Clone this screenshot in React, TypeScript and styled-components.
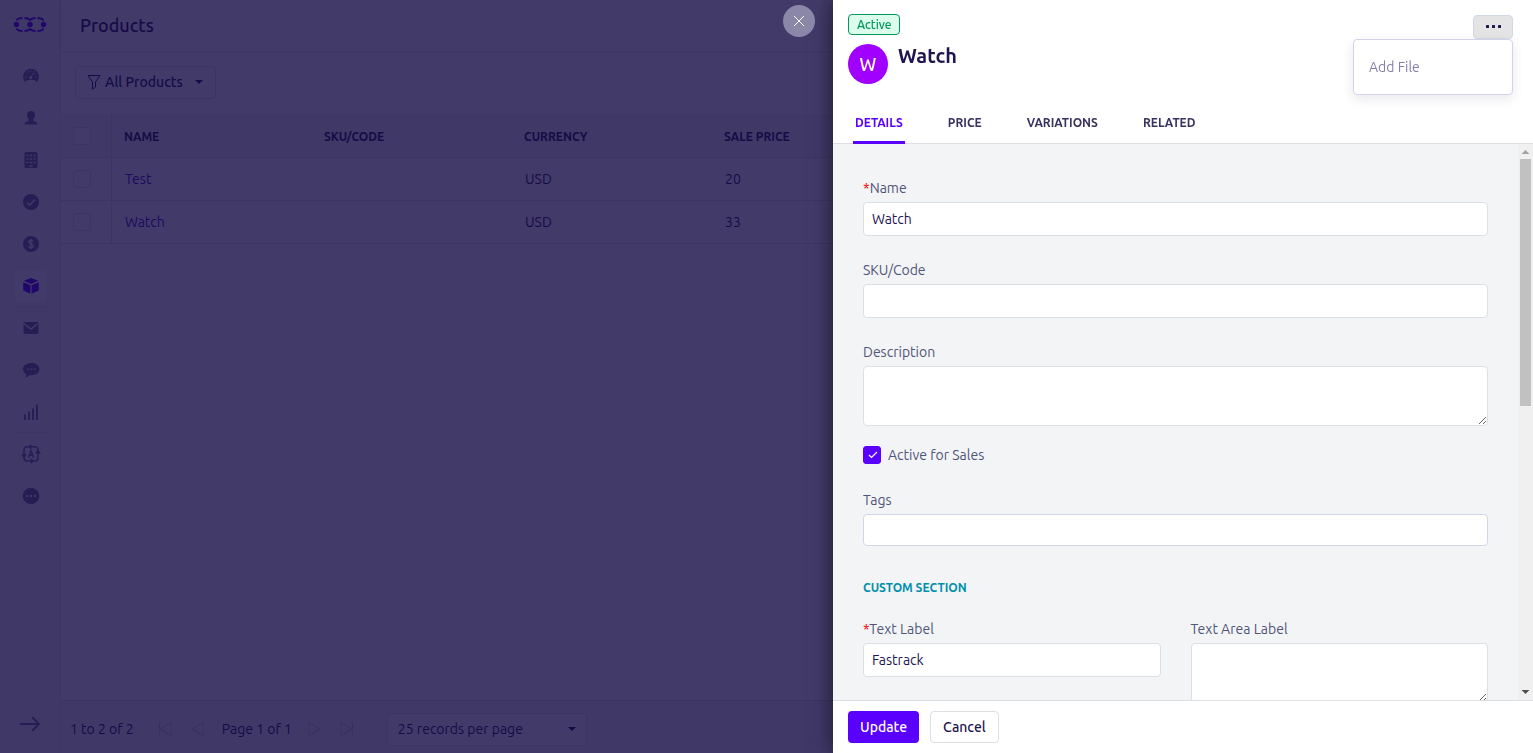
import React, { useState } from "react";
import styled, { createGlobalStyle, css } from "styled-components";

const c = {
  ink: "#1e1650",
  muted: "#50557a",
  brand: "#5a00ff",
  line: "#dcdfe6",
  soft: "#f3f4f6",
  navIcon: "#74709c",
};

const GlobalStyle = createGlobalStyle`
  *, *::before, *::after { box-sizing: border-box; }
  body { margin: 0; background: #fff; }
  body, button, input, textarea, select {
    font-family: Ubuntu, Roboto, sans-serif;
    font-size: 14px;
    line-height: 20px;
    color: ${c.ink};
  }
  button { cursor: pointer; }
`;

const Shell = styled.div`
  display: flex;
  height: 100vh;
  overflow: hidden;
`;

const Sidebar = styled.nav`
  flex: none;
  width: 61px;
  display: flex;
  flex-direction: column;
  align-items: center;
  padding: 16px 0 18px;
  background: ${c.soft};
  border-right: 1px solid ${c.line};
`;

const NavList = styled.ul`
  flex: 1;
  list-style: none;
  margin: 21px 0 0;
  padding: 0 0 0 1px;
`;

const NavItem = styled.li<{ $divided?: boolean }>`
  height: 42px;
  padding: 5px 0;
  border-bottom: 1px solid ${(p) => (p.$divided ? "#e2e4ea" : "transparent")};
`;

const NavLink = styled.a<{ $active?: boolean }>`
  display: flex;
  align-items: center;
  justify-content: center;
  width: 32px;
  height: 32px;
  border-radius: 4px;
  color: ${(p) => (p.$active ? c.brand : c.navIcon)};
  background: ${(p) => (p.$active ? "#fff" : "transparent")};
`;

const ExpandButton = styled.button`
  border: 0;
  padding: 0;
  background: none;
  display: flex;
  color: ${c.navIcon};
`;

const Main = styled.main`
  flex: 1;
  min-width: 0;
  display: flex;
  flex-direction: column;
`;

const TopBar = styled.header`
  height: 51px;
  padding: 0 19px 1px;
  display: flex;
  align-items: center;
  box-shadow: 0 1px 3px rgba(30, 22, 80, 0.15);
`;

const PageTitle = styled.h1`
  margin: 0;
  font-size: 18px;
  line-height: 24px;
  font-weight: 500;
`;

const FilterBar = styled.div`
  padding: 15px 14px;
`;

const FilterButton = styled.button`
  display: flex;
  align-items: center;
  height: 33px;
  width: 141px;
  padding: 0 12px 1px 11px;
  gap: 4px;
  border: 1px solid ${c.line};
  border-radius: 4px;
  background: #fff;
  font-weight: 500;
  white-space: nowrap;
`;

const Caret = styled.span`
  margin-left: auto;
  border: 4px solid transparent;
  border-top-color: currentColor;
  border-bottom: 0;
`;

const TableArea = styled.div`
  flex: 1;
  overflow: hidden;
`;

const ProductTable = styled.table`
  width: 100%;
  table-layout: fixed;
  border-collapse: separate;
  border-spacing: 0;
`;

const CheckCol = styled.col`
  width: 51px;
`;

const DataCol = styled.col`
  width: 200px;
`;

const cell = css`
  height: 44px;
  padding: 0 13px;
  text-align: left;
  border-bottom: 1px solid ${c.line};
  &:first-child {
    padding: 0 12px;
    border-right: 1px solid ${c.line};
  }
`;

const HeadCell = styled.th`
  ${cell}
  padding: 2px 12px 0;
  background: ${c.soft};
  font-size: 12px;
  font-weight: 700;
`;

const Cell = styled.td`
  ${cell}
  height: 43px;
`;

const ProductLink = styled.a`
  color: #4a0cd0;
  text-decoration: none;
`;

const RowCheck = styled.input`
  appearance: none;
  display: block;
  width: 18px;
  height: 18px;
  margin: 0;
  border: 1px solid ${c.line};
  border-radius: 3px;
  background: #fff;
`;

const Pager = styled.footer`
  height: 53px;
  flex: none;
  display: flex;
  align-items: center;
  padding: 4px 9px 0;
  border-top: 1px solid ${c.line};
  background: ${c.soft};
`;

const Steps = styled.div`
  display: flex;
  align-items: center;
  gap: 16px;
  margin: 0 31px 0 24px;
`;

const StepButton = styled.button`
  display: flex;
  padding: 0;
  border: 0;
  background: none;
  color: #c9cbd8;
`;

const SelectWrap = styled.div`
  position: relative;
  width: 200px;
`;

const PageSize = styled.select`
  appearance: none;
  width: 100%;
  height: 33px;
  padding: 0 10px;
  border: 1px solid ${c.line};
  border-radius: 4px;
  background: #fff;
`;

const SelectCaret = styled(Caret)`
  position: absolute;
  right: 11px;
  top: 14px;
  pointer-events: none;
`;

const Backdrop = styled.div`
  position: fixed;
  inset: 0;
  background: rgba(19, 9, 67, 0.8);
`;

const Drawer = styled.aside`
  position: fixed;
  top: 0;
  right: 0;
  bottom: 0;
  width: 700px;
  max-width: 100%;
  display: flex;
  flex-direction: column;
  background: #fff;
  box-shadow: 0 0 20px rgba(0, 0, 0, 0.6);
`;

const CloseButton = styled.button`
  position: absolute;
  top: 5px;
  left: -50px;
  width: 32px;
  height: 32px;
  display: flex;
  align-items: center;
  justify-content: center;
  padding: 0;
  border: 0;
  border-radius: 50%;
  background: #8a87a8;
  color: #fff;
`;

const DrawerHead = styled.header`
  flex: none;
  padding: 14px 15px 0;
  border-bottom: 1px solid ${c.line};
`;

const HeadTop = styled.div`
  display: flex;
  justify-content: space-between;
  align-items: flex-start;
`;

const StatusBadge = styled.span`
  display: inline-block;
  padding: 0 8px;
  border: 1px solid #009959;
  border-radius: 4px;
  background: #dcfdec;
  color: #009959;
  font-size: 12px;
  line-height: 19px;
  font-weight: 500;
`;

const Identity = styled.div`
  display: flex;
  gap: 10px;
  margin-top: 9px;
`;

const Avatar = styled.span`
  width: 40px;
  height: 40px;
  display: flex;
  align-items: center;
  justify-content: center;
  border-radius: 50%;
  background: #a100ff;
  color: #fff;
  font-size: 18px;
  font-weight: 500;
`;

const RecordName = styled.h2`
  margin: 0;
  font-size: 20px;
  line-height: 24px;
  font-weight: 700;
`;

const MenuAnchor = styled.div`
  position: relative;
  margin: 1px 5px 0 0;
`;

const MoreButton = styled.button`
  width: 40px;
  height: 24px;
  display: flex;
  align-items: center;
  justify-content: center;
  padding: 0 0 1px;
  border: 1px solid #d2d9e6;
  border-radius: 4px;
  background: #e4e4e4;
`;

const Menu = styled.div`
  position: absolute;
  z-index: 1;
  top: 24px;
  right: 0;
  width: 160px;
  padding: 12px 0;
  border: 1px solid #d2d5ea;
  border-radius: 4px;
  background: #fff;
  box-shadow: 0 4px 12px rgba(30, 22, 80, 0.1);
`;

const MenuItem = styled.button`
  display: block;
  width: 100%;
  padding: 5px 15px;
  border: 0;
  background: none;
  color: #8681a6;
  text-align: left;
`;

const Tabs = styled.div`
  display: flex;
  gap: 41px;
  margin: 16px 5px -1px;
`;

const Tab = styled.button<{ $active?: boolean }>`
  height: 44px;
  padding: 5px 2px 0;
  border: 0;
  border-bottom: 3px solid ${(p) => (p.$active ? c.brand : "transparent")};
  background: none;
  color: ${(p) => (p.$active ? c.brand : "#37325f")};
  font-size: 12px;
  font-weight: 700;
`;

const DrawerForm = styled.form`
  flex: 1;
  min-height: 0;
  display: flex;
  flex-direction: column;
`;

const ScrollRow = styled.div`
  flex: 1;
  min-height: 0;
  display: flex;
`;

const FormScroll = styled.div`
  flex: 1;
  min-width: 0;
  overflow-y: auto;
  scrollbar-width: none;
  padding: 34px 30px 600px;
  background: ${c.soft};
`;

const ScrollBar = styled.div`
  flex: none;
  width: 15px;
  display: flex;
  flex-direction: column;
  background: #f0f0f0;
`;

const ScrollArrow = styled.svg<{ $dim?: boolean }>`
  flex: none;
  fill: ${(p) => (p.$dim ? "#a3a3a3" : "#505050")};
`;

const ScrollTrack = styled.div`
  position: relative;
  flex: 1;
  margin: 0 2px;
`;

const ScrollThumb = styled.div`
  position: absolute;
  width: 100%;
  height: 47%;
  background: #c1c1c1;
`;

const Field = styled.div<{ $gap?: number }>`
  display: flex;
  flex-direction: column;
  gap: 4px;
  margin-bottom: ${(p) => p.$gap ?? 24}px;
`;

const Label = styled.label`
  color: ${c.muted};
`;

const Star = styled.span`
  color: #f00000;
`;

const control = css`
  width: 100%;
  border: 1px solid ${c.line};
  border-radius: 4px;
  background: #fff;
  padding: 0 8px;
  outline: none;
`;

const TextInput = styled.input`
  ${control}
  height: 34px;
`;

const TagInput = styled.input`
  ${control}
  height: 32px;
  border-color: #d2d5e8;
`;

const TextArea = styled.textarea`
  ${control}
  display: block;
  height: 60px;
  padding: 6px 8px;
`;

const CheckLine = styled.label`
  display: flex;
  align-items: center;
  gap: 7px;
  height: 18px;
  margin-bottom: 26px;
  color: ${c.muted};
`;

const CheckBox = styled.span`
  position: relative;
  display: flex;
  width: 18px;
  height: 18px;
  color: #fff;

  input {
    appearance: none;
    width: 18px;
    height: 18px;
    margin: 0;
    border: 1px solid #c9cbdc;
    border-radius: 3px;
    background: #fff;
  }
  input:checked {
    border-color: ${c.brand};
    background: ${c.brand};
  }
  svg {
    position: absolute;
    inset: 0;
    pointer-events: none;
  }
`;

const SectionTitle = styled.h3`
  margin: 32px 0 21px;
  color: #008fab;
  font-size: 12px;
  line-height: 20px;
  font-weight: 700;
`;

const TwoColumns = styled.div`
  display: grid;
  grid-template-columns: 1fr 1fr;
  gap: 30px;
`;

const Actions = styled.footer`
  flex: none;
  display: flex;
  gap: 11px;
  padding: 10px 15px;
  border-top: 1px solid ${c.line};
  background: #fff;
`;

const ActionButton = styled.button<{ $primary?: boolean }>`
  height: 32px;
  padding: 0 12px;
  border: ${(p) => (p.$primary ? "0" : `1px solid ${c.line}`)};
  border-radius: 4px;
  background: ${(p) => (p.$primary ? c.brand : "#fff")};
  color: ${(p) => (p.$primary ? "#fff" : c.ink)};
  font-weight: 500;
`;

const Logo = () => (
  <svg width="34" height="18" viewBox="0 0 34 18" fill="none" stroke={c.brand} strokeWidth="1.800" aria-hidden="true">
    <path d="M3.500 4.500C4.500 2.500 6.500 2 9.500 2M11.500 2c2.500 0 4 .5 5.500 2 1.500-1.500 3-2 5.500-2M24.500 2c3 0 5 .5 6 2.500" />
    <path d="M3.500 12.500c1 2 3 2.500 6 2.500M11.500 15c2.500 0 4-.5 5.500-2 1.500 1.500 3 2 5.500 2M24.500 15c3 0 5-.5 6-2.500" />
    <g fill={c.brand} stroke="none">
      <circle cx="3.500" cy="8.500" r="2.700" />
      <circle cx="17" cy="8.500" r="2.700" />
      <circle cx="30.500" cy="8.500" r="2.700" />
    </g>
  </svg>
);

const hole = c.soft;

const icons: Record<string, React.ReactNode> = {
  Dashboard: (
    <>
      <path d="M3 15A8 8 0 1 1 15 15L12.500 13H5.500z" fill="currentColor" />
      <path d="M8.500 10.500L11.500 6M3 10h1.500M13.500 10H15M4 6.500l1.200.7M9 3.300v1.500M6 4l.6 1.200M14 6.500l-1.200.7M12 4l-.6 1.200" stroke={hole} strokeWidth="1" />
      <circle cx="8.700" cy="10.500" r="1.500" fill={hole} />
    </>
  ),
  Contacts: <path d="M9 2c2.600 0 4 1.600 4 4 0 1.800-.7 3.600-1.800 4.400v1.200c1 1 4.300 1.200 4.300 3.900H2.500c0-2.700 3.300-2.900 4.300-3.900v-1.200C5.700 9.600 5 7.800 5 6c0-2.400 1.400-4 4-4z" fill="currentColor" />,
  Accounts: (
    <>
      <rect x="2.500" y="1" width="13" height="16" rx="1.500" fill="currentColor" />
      <path d="M4.500 4.500h2M8 4.500h2M11.500 4.500h2M4.500 8h2M8 8h2M11.500 8h2M4.500 11.500h2M8 11.500h2M11.500 11.500h2M7.500 15h3" stroke={hole} strokeWidth="1.300" />
    </>
  ),
  Tasks: (
    <>
      <circle cx="9" cy="9" r="8" fill="currentColor" />
      <path d="M5 9.500l2.700 2.700L13 6.500" fill="none" stroke={hole} strokeWidth="1.400" />
    </>
  ),
  Deals: (
    <>
      <circle cx="9" cy="9" r="8" fill="currentColor" />
      <path d="M11.200 6.700C10.800 5.800 10 5.500 9 5.500c-1.200 0-2.100.6-2.100 1.600C6.900 9.600 11.200 8.300 11.200 10.900c0 1-.9 1.600-2.200 1.600-1.100 0-2-.4-2.300-1.400M9 4v10" fill="none" stroke={hole} strokeWidth="1.300" />
    </>
  ),
  Products: (
    <>
      <path d="M9 1l7.200 2.800L9 7 1.800 3.800z" fill="currentColor" />
      <path d="M1.200 5.200l7.200 3v8.600l-7.200-3.200zM16.800 5.200l-7.200 3v8.600l7.200-3.200z" fill="currentColor" />
    </>
  ),
  Email: (
    <>
      <rect x="1.500" y="3" width="15" height="12" rx="1.500" fill="currentColor" />
      <path d="M2 4.500l7 5.500 7-5.500" fill="none" stroke={hole} strokeWidth="1.400" />
    </>
  ),
  Chat: (
    <>
      <path d="M9.500 2c4.700 0 8 2.600 8 6s-3.300 6.200-8 6.200c-.8 0-1.600-.1-2.300-.2C6.400 15.600 5 16.500 3 16.500c.9-1 1.300-2 1.200-3.400C2.300 12 1 10.200 1 8c0-3.400 3.800-6 8.500-6z" fill="currentColor" />
      <path d="M5.500 8.200h1.600M8.700 8.200h1.600M11.900 8.200h1.600" stroke={hole} strokeWidth="1.400" />
    </>
  ),
  Reports: <path d="M3 11.500V17M7 8.500V17M11 5.500V17M15 1.500V17" stroke="currentColor" strokeWidth="1.900" />,
  Automation: (
    <>
      <path d="M5.500 1.800H12.500Q16 1.800 16 5V12.500Q16 16 12.500 16H5.500Q2 16 2 12.500V5Q2 1.800 5.500 1.800z" fill="none" stroke="currentColor" strokeWidth="1.600" />
      <path d="M6 1.800L9.500-1V4.600zM16 4.500l3 4h-6zM12 16l-3.500 3v-6zM2 13l-3-4h6z" fill="currentColor" />
      <path d="M6.500 12.500L9 5.500l2.500 7M7.300 10.200h3.400" fill="none" stroke="currentColor" strokeWidth="1.400" />
    </>
  ),
  More: (
    <>
      <circle cx="9" cy="9" r="8.300" fill="currentColor" />
      <path d="M4.200 9h2M8 9h2M11.800 9h2" stroke={hole} strokeWidth="2" />
    </>
  ),
};

const names = Object.keys(icons);

const Step = ({ label, flip, bar }: { label: string; flip?: boolean; bar?: boolean }) => (
  <StepButton type="button" aria-label={label}>
    <svg width="16" height="16" viewBox="0 0 16 16" fill="none" stroke="currentColor">
      <g transform={flip ? "matrix(-1 0 0 1 14 0)" : undefined}>
        <path d="M13 1.500v13L2 8z" />
        {bar && <path d="M1.500 1.500v13" />}
      </g>
    </svg>
  </StepButton>
);

const rows = [
  { name: "Test", currency: "USD", price: "20" },
  { name: "Watch", currency: "USD", price: "33" },
];

function ScrollArea({ children }: { children: React.ReactNode }) {
  const [progress, setProgress] = useState(0);

  const onScroll = (e: React.UIEvent<HTMLDivElement>) => {
    const el = e.currentTarget;
    setProgress(el.scrollTop / (el.scrollHeight - el.clientHeight));
  };

  return (
    <ScrollRow>
      <FormScroll onScroll={onScroll}>{children}</FormScroll>
      <ScrollBar aria-hidden="true">
        <ScrollArrow $dim={progress === 0} width="15" height="15" viewBox="0 0 15 15">
          <path d="M3.500 10h8L7.500 6z" />
        </ScrollArrow>
        <ScrollTrack>
          <ScrollThumb style={{ top: `${progress * 53}%` }} />
        </ScrollTrack>
        <ScrollArrow $dim={progress === 1} width="15" height="15" viewBox="0 0 15 15">
          <path d="M3.500 5h8L7.500 9z" />
        </ScrollArrow>
      </ScrollBar>
    </ScrollRow>
  );
}

export default function App() {
  return (
    <>
      <GlobalStyle />
      <Shell>
        <Sidebar aria-label="Main">
          <Logo />
          <NavList>
            {names.map((n) => (
              <NavItem key={n} $divided={n === "Products" || n === "Reports"}>
                <NavLink href="#" aria-label={n} $active={n === "Products"}>
                  <svg width="18" height="18" viewBox="0 0 18 18" overflow="visible">{icons[n]}</svg>
                </NavLink>
              </NavItem>
            ))}
          </NavList>
          <ExpandButton type="button" aria-label="Expand">
            <svg width="22" height="22" viewBox="0 0 22 22" fill="none" stroke="currentColor" strokeWidth="1.800">
              <path d="M1 11h19M13 4l7 7-7 7" />
            </svg>
          </ExpandButton>
        </Sidebar>

        <Main>
          <TopBar>
            <PageTitle>Products</PageTitle>
          </TopBar>
          <FilterBar>
            <FilterButton type="button">
              <svg width="14" height="16" viewBox="0 0 14 16" fill="none" stroke="currentColor" aria-hidden="true">
                <path d="M1 1.500h12L8.500 8v5L5.500 15V8z" />
              </svg>
              All Products
              <Caret />
            </FilterButton>
          </FilterBar>
          <TableArea>
            <ProductTable>
              <colgroup>
                <CheckCol />
                <DataCol />
                <DataCol />
                <DataCol />
                <col />
              </colgroup>
              <thead>
                <tr>
                  <HeadCell><RowCheck type="checkbox" aria-label="Select all" /></HeadCell>
                  <HeadCell>NAME</HeadCell>
                  <HeadCell>SKU/CODE</HeadCell>
                  <HeadCell>CURRENCY</HeadCell>
                  <HeadCell>SALE PRICE</HeadCell>
                </tr>
              </thead>
              <tbody>
                {rows.map((r) => (
                  <tr key={r.name}>
                    <Cell><RowCheck type="checkbox" aria-label={r.name} /></Cell>
                    <Cell><ProductLink href="#">{r.name}</ProductLink></Cell>
                    <Cell />
                    <Cell>{r.currency}</Cell>
                    <Cell>{r.price}</Cell>
                  </tr>
                ))}
              </tbody>
            </ProductTable>
          </TableArea>
          <Pager>
            <span>1 to 2 of 2</span>
            <Steps>
              <Step label="First page" bar />
              <Step label="Previous page" />
              <span>Page 1 of 1</span>
              <Step label="Next page" flip />
              <Step label="Last page" flip bar />
            </Steps>
            <SelectWrap>
              <PageSize aria-label="Records per page">
                <option>25 records per page</option>
              </PageSize>
              <SelectCaret />
            </SelectWrap>
          </Pager>
        </Main>
      </Shell>

      <Backdrop />

      <Drawer aria-label="Watch">
        <CloseButton type="button" aria-label="Close">
          <svg width="12" height="12" viewBox="0 0 12 12" stroke="currentColor" strokeWidth="1">
            <path d="M1 1l10 10M11 1L1 11" />
          </svg>
        </CloseButton>

        <DrawerHead>
          <HeadTop>
            <div>
              <StatusBadge>Active</StatusBadge>
              <Identity>
                <Avatar>W</Avatar>
                <RecordName>Watch</RecordName>
              </Identity>
            </div>
            <MenuAnchor>
              <MoreButton type="button" aria-label="More actions">
                <svg width="15" height="3" viewBox="0 0 15 3" fill="currentColor">
                  <rect x="0" y="0" width="3" height="3" rx="0.500" />
                  <rect x="6" y="0" width="3" height="3" rx="0.500" />
                  <rect x="12" y="0" width="3" height="3" rx="0.500" />
                </svg>
              </MoreButton>
              <Menu role="menu">
                <MenuItem type="button" role="menuitem">Add File</MenuItem>
              </Menu>
            </MenuAnchor>
          </HeadTop>
          <Tabs role="tablist">
            <Tab type="button" role="tab" $active>DETAILS</Tab>
            <Tab type="button" role="tab">PRICE</Tab>
            <Tab type="button" role="tab">VARIATIONS</Tab>
            <Tab type="button" role="tab">RELATED</Tab>
          </Tabs>
        </DrawerHead>

        <DrawerForm onSubmit={(e) => e.preventDefault()}>
          <ScrollArea>
            <Field>
              <Label htmlFor="name"><Star>*</Star>Name</Label>
              <TextInput id="name" defaultValue="Watch" />
            </Field>
            <Field>
              <Label htmlFor="sku">SKU/Code</Label>
              <TextInput id="sku" />
            </Field>
            <Field $gap={20}>
              <Label htmlFor="description">Description</Label>
              <TextArea id="description" />
            </Field>
            <CheckLine>
              <CheckBox>
                <input type="checkbox" defaultChecked />
                <svg width="18" height="18" viewBox="0 0 18 18" fill="none" stroke="currentColor" strokeWidth="1.200">
                  <path d="M6 9l2.500 2.500L14 6" />
                </svg>
              </CheckBox>
              Active for Sales
            </CheckLine>
            <Field>
              <Label htmlFor="tags">Tags</Label>
              <TagInput id="tags" />
            </Field>
            <SectionTitle>CUSTOM SECTION</SectionTitle>
            <TwoColumns>
              <Field>
                <Label htmlFor="text-label"><Star>*</Star>Text Label</Label>
                <TextInput id="text-label" defaultValue="Fastrack" />
              </Field>
              <Field>
                <Label htmlFor="area-label">Text Area Label</Label>
                <TextArea id="area-label" />
              </Field>
            </TwoColumns>
          </ScrollArea>
          <Actions>
            <ActionButton type="submit" $primary>Update</ActionButton>
            <ActionButton type="button">Cancel</ActionButton>
          </Actions>
        </DrawerForm>
      </Drawer>
    </>
  );
}
